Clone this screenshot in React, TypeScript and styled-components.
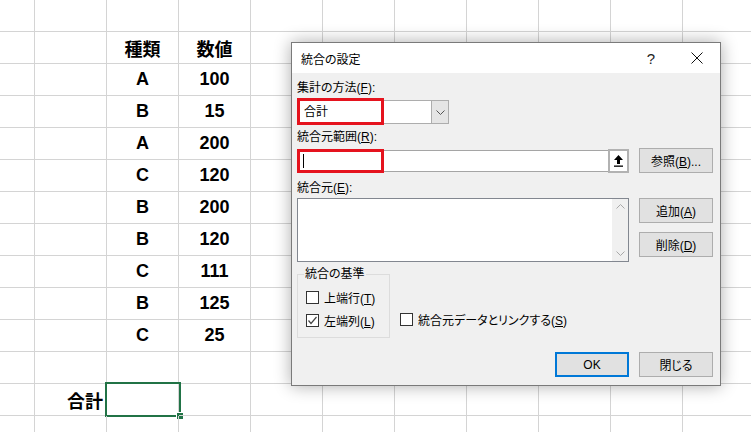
import React from 'react';
import styled, { createGlobalStyle } from 'styled-components';

const GlobalStyle = createGlobalStyle`
    html, body {
        margin: 0;
        padding: 0;
        background: #ffffff;
        overflow: hidden;
    }
`;

const Screen = styled.div`
    position: relative;
    width: 751px;
    height: 432px;
    overflow: hidden;
    background: #ffffff;
`;

/* ---------- worksheet ---------- */

const Sheet = styled.div`
    display: grid;
    grid-template-columns: repeat(11, 72px);
    grid-auto-rows: 32px;
    margin-left: -37px;
    font-family: "Liberation Sans", "Noto Sans CJK JP", sans-serif;
    font-weight: bold;
    font-size: 18px;
    color: #000;
`;

const Cell = styled.div<{ $align?: 'center' | 'right' }>`
    position: relative;
    box-sizing: border-box;
    border-right: 1px solid #d4d4d4;
    border-bottom: 1px solid #d4d4d4;
    display: flex;
    align-items: center;
    justify-content: ${(p) => (p.$align === 'right' ? 'flex-end' : 'center')};
    padding: 0 3px;
`;

const Selection = styled.div`
    position: absolute;
    left: -2px;
    top: -2px;
    right: -3px;
    bottom: -2px;
    border: 2px solid #217346;

    &::after {
        content: '';
        position: absolute;
        right: -5px;
        bottom: -5px;
        width: 6px;
        height: 6px;
        background: #217346;
        border: 1px solid #fff;
    }
`;

/* ---------- dialog ---------- */

const Dialog = styled.div`
    position: absolute;
    left: 291px;
    top: 42px;
    width: 430px;
    height: 344px;
    box-sizing: border-box;
    border: 1px solid #7a7a7a;
    background: #f0f0f0;
    box-shadow: 0 0 16px rgba(0, 0, 0, 0.33);
    font-family: "Liberation Sans", "Noto Sans CJK JP", sans-serif;
    font-size: 12px;
    font-feature-settings: "palt";
    color: #000;
    display: flex;
    flex-direction: column;
`;

const TitleBar = styled.div`
    height: 30px;
    background: #ffffff;
    display: flex;
    align-items: center;
    padding-left: 9px;
`;

const Title = styled.div`
    flex: 1;
    font-size: 12px;
`;

const TitleButton = styled.div`
    width: 46px;
    height: 30px;
    display: flex;
    align-items: center;
    justify-content: center;
    font-family: "Liberation Sans", sans-serif;
    font-size: 15px;
    color: #222;
`;

const Body = styled.div`
    flex: 1;
    display: flex;
    flex-direction: column;
    padding: 0 7px 0 5px;
`;

const Label = styled.div<{ $top: number }>`
    height: 16px;
    line-height: 16px;
    margin-top: ${(p) => p.$top}px;
    white-space: nowrap;
`;

const Row = styled.div<{ $top: number; $align?: string }>`
    display: flex;
    align-items: ${(p) => p.$align || 'center'};
    gap: 10px;
    margin-top: ${(p) => p.$top}px;
`;

const Highlighted = styled.div`
    position: relative;
`;

const RedMark = styled.div<{ $w: number; $h: number; $y: number }>`
    position: absolute;
    left: 0;
    top: ${(p) => p.$y}px;
    width: ${(p) => p.$w}px;
    height: ${(p) => p.$h}px;
    box-sizing: border-box;
    border: 3px solid #e5131e;
    pointer-events: none;
`;

const Combo = styled.div`
    width: 152px;
    height: 24px;
    box-sizing: border-box;
    border: 1px solid #adadad;
    background: #fff;
    display: flex;
`;

const ComboText = styled.div`
    flex: 1;
    padding-left: 6px;
    line-height: 22px;
`;

const ComboButton = styled.div`
    width: 16px;
    background: #e5e5e5;
    border-left: 1px solid #adadad;
    display: flex;
    align-items: center;
    justify-content: center;
`;

const RangeInput = styled.div`
    width: 332px;
    height: 24px;
    display: flex;
`;

const InputField = styled.div`
    flex: 1;
    margin: 1px 0;
    box-sizing: border-box;
    border: 1px solid #a5a5a5;
    border-right: none;
    background: #fff;
    display: flex;
    align-items: center;
    padding-left: 5px;
`;

const Caret = styled.div`
    width: 1px;
    height: 14px;
    background: #000;
`;

const PickButton = styled.div`
    width: 21px;
    box-sizing: border-box;
    border: 2px solid #b2b2b2;
    background: #fff;
    display: flex;
    align-items: center;
    justify-content: center;
`;

const Button = styled.div<{ $primary?: boolean }>`
    width: 74px;
    height: 25px;
    box-sizing: border-box;
    background: #e1e1e1;
    border: ${(p) => (p.$primary ? '2px solid #0078d7' : '1px solid #adadad')};
    display: flex;
    align-items: center;
    justify-content: center;
    font-size: 12px;
    white-space: nowrap;
`;

const ButtonStack = styled.div`
    display: flex;
    flex-direction: column;
    gap: 9px;
`;

const ListBox = styled.div`
    width: 332px;
    height: 64px;
    box-sizing: border-box;
    border: 1px solid #828790;
    background: #fff;
    display: flex;
    justify-content: flex-end;
`;

const ScrollBar = styled.div`
    width: 16px;
    background: #f0f0f0;
    display: flex;
    flex-direction: column;
    justify-content: space-between;
    align-items: center;
    padding: 5px 0;
`;

const Group = styled.fieldset`
    margin: 0;
    width: 93px;
    height: 72px;
    box-sizing: border-box;
    border: 1px solid #dcdcdc;
    padding: 7px 0 0 8px;
    display: flex;
    flex-direction: column;
    gap: 7px;
`;

const Legend = styled.legend`
    padding: 0 1px;
    margin-left: -2px;
    line-height: 16px;
    font-size: 12px;
`;

const CheckRow = styled.div<{ $bottom?: number }>`
    display: flex;
    align-items: center;
    gap: 5px;
    height: 16px;
    white-space: nowrap;
    margin-bottom: ${(p) => p.$bottom || 0}px;
`;

const Box = styled.div`
    width: 13px;
    height: 13px;
    box-sizing: border-box;
    border: 1px solid #333;
    background: #fff;
    display: flex;
    align-items: center;
    justify-content: center;
`;

const Footer = styled.div`
    display: flex;
    justify-content: flex-end;
    gap: 10px;
    margin-top: 14px;
`;

const Chevron = ({ up = false, color = '#555' }: { up?: boolean; color?: string }) => (
    <svg width="9" height="5" viewBox="0 0 9 5">
        <polyline
            points={up ? '0.5,4.5 4.5,0.5 8.5,4.5' : '0.5,0.5 4.5,4.5 8.5,0.5'}
            fill="none"
            stroke={color}
            strokeWidth="1"
        />
    </svg>
);

// text with an underlined access key, e.g. 上端行(T)
const KeyText = ({ text, k, after = '' }: { text: string; k: string; after?: string }) => (
    <span>
        {text}(<u>{k}</u>){after}
    </span>
);

const Check = ({ checked }: { checked?: boolean }) => (
    <Box>
        {checked && (
            <svg width="11" height="11" viewBox="0 0 11 11">
                <polyline points="1.5,5.5 4,8.5 9.5,2" fill="none" stroke="#444" strokeWidth="1.2" />
            </svg>
        )}
    </Box>
);

const sheetRows: { type: string; value: string }[] = [
    { type: '種類', value: '数値' },
    { type: 'A', value: '100' },
    { type: 'B', value: '15' },
    { type: 'A', value: '200' },
    { type: 'C', value: '120' },
    { type: 'B', value: '200' },
    { type: 'B', value: '120' },
    { type: 'C', value: '111' },
    { type: 'B', value: '125' },
    { type: 'C', value: '25' },
];

const COLS = 11;
const ROWS = 14;

const cellContent = (r: number, c: number) => {
    const data = sheetRows[r - 1];
    if (data && c === 2) return data.type;
    if (data && c === 3) return data.value;
    return null;
};

const App = () => {
    return (
        <Screen>
            <GlobalStyle />
            <Sheet>
                {Array.from({ length: ROWS }).map((_, r) =>
                    Array.from({ length: COLS }).map((__, c) => {
                        if (r === 12 && c === 1) {
                            return (
                                <Cell key={`${r}-${c}`} $align="right">
                                    合計
                                </Cell>
                            );
                        }
                        if (r === 12 && c === 2) {
                            return (
                                <Cell key={`${r}-${c}`}>
                                    <Selection />
                                </Cell>
                            );
                        }
                        return <Cell key={`${r}-${c}`}>{cellContent(r, c)}</Cell>;
                    })
                )}
            </Sheet>

            {/* 統合の設定 dialog */}
            <Dialog>
                <TitleBar>
                    <Title>統合の設定</Title>
                    <TitleButton>?</TitleButton>
                    <TitleButton>
                        <svg width="12" height="12" viewBox="0 0 12 12">
                            <path d="M0.5 0.5 L11.5 11.5 M11.5 0.5 L0.5 11.5" stroke="#111" strokeWidth="1" />
                        </svg>
                    </TitleButton>
                </TitleBar>

                <Body>
                    <Label $top={7}>
                        <KeyText text="集計の方法" k="F" after=":" />
                    </Label>
                    <Row $top={4}>
                        <Highlighted>
                            <Combo>
                                <ComboText>合計</ComboText>
                                <ComboButton>
                                    <Chevron />
                                </ComboButton>
                            </Combo>
                            <RedMark $w={87} $h={27} $y={-2} />
                        </Highlighted>
                    </Row>

                    <Label $top={5}>
                        <KeyText text="統合元範囲" k="R" after=":" />
                    </Label>
                    <Row $top={3}>
                        <Highlighted>
                            <RangeInput>
                                <InputField>
                                    <Caret />
                                </InputField>
                                <PickButton>
                                    <svg width="11" height="13" viewBox="0 0 11 13">
                                        <path d="M5.5 1 L10 6 L7 6 L7 10 L4 10 L4 6 L1 6 Z" fill="#000" />
                                        <rect x="1" y="11.5" width="9" height="1.3" fill="#000" />
                                    </svg>
                                </PickButton>
                            </RangeInput>
                            <RedMark $w={87} $h={24} $y={0} />
                        </Highlighted>
                        <Button>
                            <KeyText text="参照" k="B" after="..." />
                        </Button>
                    </Row>

                    <Label $top={7}>
                        <KeyText text="統合元" k="E" after=":" />
                    </Label>
                    <Row $top={2} $align="flex-start">
                        <ListBox>
                            <ScrollBar>
                                <Chevron up color="#a8a8a8" />
                                <Chevron color="#a8a8a8" />
                            </ScrollBar>
                        </ListBox>
                        <ButtonStack>
                            <Button>
                                <KeyText text="追加" k="A" />
                            </Button>
                            <Button>
                                <KeyText text="削除" k="D" />
                            </Button>
                        </ButtonStack>
                    </Row>

                    <Row $top={4} $align="flex-end">
                        <Group>
                            <Legend>統合の基準</Legend>
                            <CheckRow>
                                <Check />
                                <KeyText text="上端行" k="T" />
                            </CheckRow>
                            <CheckRow>
                                <Check checked />
                                <KeyText text="左端列" k="L" />
                            </CheckRow>
                        </Group>
                        <CheckRow $bottom={11}>
                            <Check />
                            <KeyText text="統合元データとリンクする" k="S" />
                        </CheckRow>
                    </Row>

                    <Footer>
                        <Button $primary>OK</Button>
                        <Button>閉じる</Button>
                    </Footer>
                </Body>
            </Dialog>
        </Screen>
    );
};

export default App;
